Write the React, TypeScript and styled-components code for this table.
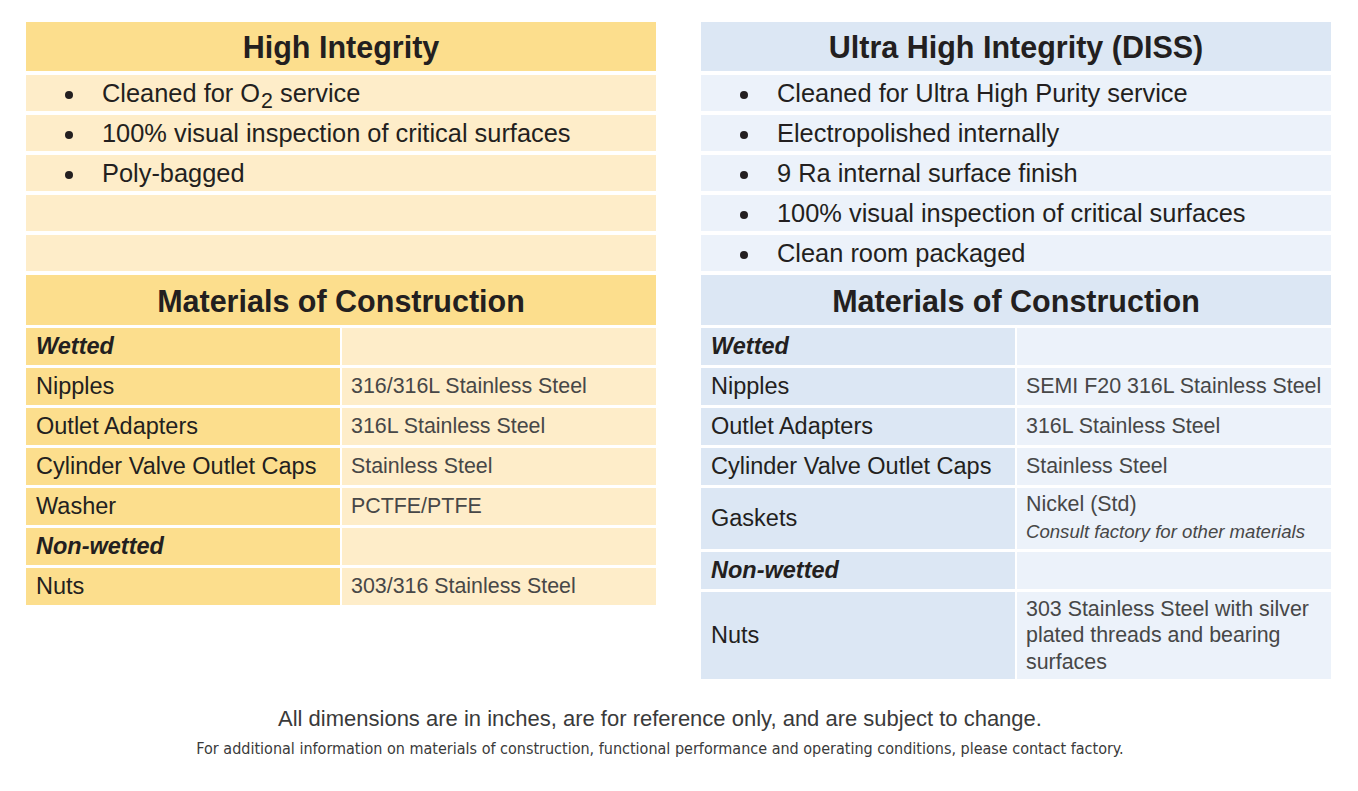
import React from "react";
import styled, { createGlobalStyle } from "styled-components";

const GlobalStyle = createGlobalStyle`
  html, body { margin: 0; padding: 0; background: #ffffff; }
  body { font-family: "Liberation Sans", Arial, sans-serif; color: #231f20; }
`;

type Tone = "yellow" | "blue";
const palette: Record<Tone, { strong: string; soft: string }> = {
  yellow: { strong: "#fcde8d", soft: "#feedc9" },
  blue: { strong: "#dce7f4", soft: "#ecf2fa" },
};

const Page = styled.div`
  width: 1358px;
  height: 791px;
  box-sizing: border-box;
  padding: 22px 0 0 26px;
  display: flex;
  flex-direction: column;
`;

const Panels = styled.div`
  display: flex;
  gap: 45px;
  align-items: flex-start;
`;

const Panel = styled.section`
  width: 630px;
  display: flex;
  flex-direction: column;
  gap: 4px;
`;

const Title = styled.h2<{ $tone: Tone }>`
  margin: 0;
  height: 49px;
  padding-top: 2px;
  box-sizing: border-box;
  display: flex;
  align-items: center;
  justify-content: center;
  background: ${(p) => palette[p.$tone].strong};
  font-size: 30.5px;
  font-weight: 700;
  color: #231f20;
`;

const BulletRow = styled.div<{ $tone: Tone }>`
  height: 36px;
  display: flex;
  align-items: center;
  background: ${(p) => palette[p.$tone].soft};
  font-size: 25.4px;
  color: #231f20;
  white-space: nowrap;
`;

const DotCell = styled.span`
  width: 76px;
  height: 100%;
  box-sizing: border-box;
  padding: 3px 0 0 39px;
  display: flex;
  align-items: center;
`;

const Dot = styled.span`
  width: 8px;
  height: 8px;
  border-radius: 50%;
  background: #231f20;
`;

const Sub = styled.span`
  font-size: 0.84em;
  position: relative;
  top: 0.3em;
  margin-left: 1px;
`;

const Table = styled.div`
  display: grid;
  grid-template-columns: 314px 314px;
  column-gap: 2px;
  row-gap: 3px;
`;

const TableHeader = styled.h3<{ $tone: Tone }>`
  grid-column: 1 / span 2;
  margin: 0;
  height: 50px;
  padding-top: 2px;
  box-sizing: border-box;
  display: flex;
  align-items: center;
  justify-content: center;
  background: ${(p) => palette[p.$tone].strong};
  font-size: 30.5px;
  font-weight: 700;
  color: #231f20;
`;

const Label = styled.div<{ $tone: Tone; $group?: boolean; $h?: number }>`
  min-height: ${(p) => p.$h ?? 37}px;
  box-sizing: border-box;
  padding-left: 10px;
  display: flex;
  align-items: center;
  background: ${(p) => palette[p.$tone].strong};
  font-size: 23.5px;
  color: #231f20;
  white-space: nowrap;
  font-weight: ${(p) => (p.$group ? 700 : 400)};
  font-style: ${(p) => (p.$group ? "italic" : "normal")};
`;

const Value = styled.div<{ $tone: Tone; $h?: number }>`
  min-height: ${(p) => p.$h ?? 37}px;
  box-sizing: border-box;
  padding: 3px 0 3px 9px;
  display: flex;
  flex-direction: column;
  justify-content: center;
  background: ${(p) => palette[p.$tone].soft};
  font-size: 21.4px;
  line-height: 26.5px;
  color: #474747;
  white-space: nowrap;
`;

const Note = styled.span`
  font-size: 18.6px;
  font-style: italic;
  line-height: 28px;
`;

const Footer = styled.footer`
  margin-top: 26px;
  padding-right: 64px;
  display: flex;
  flex-direction: column;
  align-items: center;
  color: #3a3a3a;
`;

const FooterMain = styled.p`
  margin: 0;
  font-size: 22px;
  line-height: 28px;
`;

const FooterSmall = styled.p`
  margin: 4px 0 0;
  font-family: "DejaVu Sans Condensed", "Liberation Sans", Arial, sans-serif;
  font-stretch: condensed;
  font-size: 16px;
  line-height: 24px;
`;

type Row = { label: string; value?: React.ReactNode; group?: boolean; h?: number };

const leftRows: Row[] = [
  { label: "Wetted", group: true },
  { label: "Nipples", value: "316/316L Stainless Steel" },
  { label: "Outlet Adapters", value: "316L Stainless Steel" },
  { label: "Cylinder Valve Outlet Caps", value: "Stainless Steel" },
  { label: "Washer", value: "PCTFE/PTFE" },
  { label: "Non-wetted", group: true },
  { label: "Nuts", value: "303/316 Stainless Steel" },
];

const rightRows: Row[] = [
  { label: "Wetted", group: true },
  { label: "Nipples", value: "SEMI F20 316L Stainless Steel" },
  { label: "Outlet Adapters", value: "316L Stainless Steel" },
  { label: "Cylinder Valve Outlet Caps", value: "Stainless Steel" },
  {
    label: "Gaskets",
    h: 61,
    value: (
      <>
        <span>Nickel (Std)</span>
        <Note>Consult factory for other materials</Note>
      </>
    ),
  },
  { label: "Non-wetted", group: true },
  {
    label: "Nuts",
    h: 87,
    value: (
      <>
        303 Stainless Steel with silver
        <br />
        plated threads and bearing
        <br />
        surfaces
      </>
    ),
  },
];

function Materials({ tone, rows }: { tone: Tone; rows: Row[] }) {
  return (
    <Table>
      <TableHeader $tone={tone}>Materials of Construction</TableHeader>
      {rows.map((r) => (
        <React.Fragment key={r.label}>
          <Label $tone={tone} $group={r.group} $h={r.h}>
            {r.label}
          </Label>
          <Value $tone={tone} $h={r.h}>
            {r.value}
          </Value>
        </React.Fragment>
      ))}
    </Table>
  );
}

function Bullet({ tone, children }: { tone: Tone; children?: React.ReactNode }) {
  return (
    <BulletRow $tone={tone}>
      {children ? (
        <DotCell>
          <Dot />
        </DotCell>
      ) : null}
      {children}
    </BulletRow>
  );
}

export default function App() {
  return (
    <>
      <GlobalStyle />
      <Page>
        <Panels>
          <Panel>
            <Title $tone="yellow">High Integrity</Title>
            <Bullet tone="yellow">
              <span>
                Cleaned for O<Sub>2</Sub> service
              </span>
            </Bullet>
            <Bullet tone="yellow">100% visual inspection of critical surfaces</Bullet>
            <Bullet tone="yellow">Poly-bagged</Bullet>
            <Bullet tone="yellow" />
            <Bullet tone="yellow" />
            <Materials tone="yellow" rows={leftRows} />
          </Panel>
          <Panel>
            <Title $tone="blue">Ultra High Integrity (DISS)</Title>
            <Bullet tone="blue">Cleaned for Ultra High Purity service</Bullet>
            <Bullet tone="blue">Electropolished internally</Bullet>
            <Bullet tone="blue">9 Ra internal surface finish</Bullet>
            <Bullet tone="blue">100% visual inspection of critical surfaces</Bullet>
            <Bullet tone="blue">Clean room packaged</Bullet>
            <Materials tone="blue" rows={rightRows} />
          </Panel>
        </Panels>
        <Footer>
          <FooterMain>
            All dimensions are in inches, are for reference only, and are subject to change.
          </FooterMain>
          <FooterSmall>
            For additional information on materials of construction, functional performance and
            operating conditions, please contact factory.
          </FooterSmall>
        </Footer>
      </Page>
    </>
  );
}
